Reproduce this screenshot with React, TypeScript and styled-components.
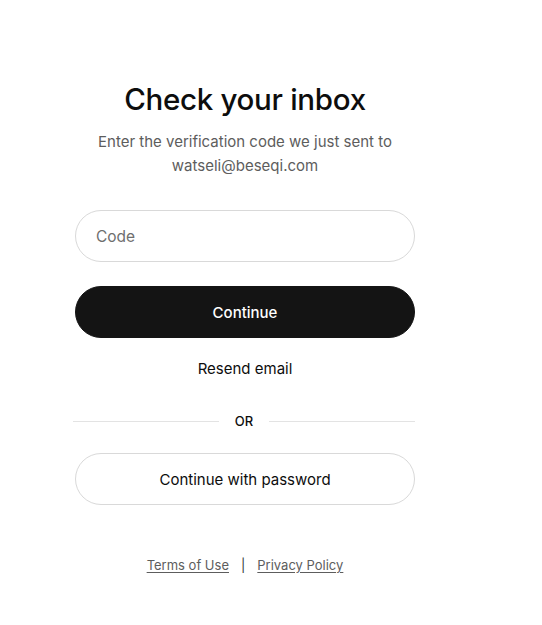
import React from "react";
import styled, { createGlobalStyle } from "styled-components";

const Global = createGlobalStyle`
  html, body { margin: 0; padding: 0; background: #fff; }
  body { font-family: Inter, "Noto Sans", sans-serif; color: #0d0d0d; }
  * { box-sizing: border-box; }
`;

const Page = styled.main`
  display: flex;
  justify-content: flex-start;
  padding: 80px 0 40px 75px;
  min-height: 625px;
`;

const Column = styled.section`
  width: 340px;
  display: flex;
  flex-direction: column;
  align-items: stretch;
`;

const Title = styled.h1`
  margin: 0;
  font-size: 29.5px;
  font-weight: 500;
  line-height: 38px;
  text-align: center;
  letter-spacing: -0.3px;
  color: #0d0d0d;
`;

const Subtitle = styled.p`
  margin: 12px 0 0;
  font-size: 15px;
  line-height: 24px;
  text-align: center;
  color: #5d5d5d;
`;

const Field = styled.input`
  margin-top: 32px;
  height: 52px;
  width: 100%;
  border: 1px solid #d9d9d9;
  border-radius: 26px;
  padding: 0 20px;
  font: inherit;
  font-size: 15.5px;
  color: #0d0d0d;
  outline: none;
  &::placeholder { color: #6e6e6e; }
`;

const PillButton = styled.button<{ $dark?: boolean }>`
  height: 52px;
  width: 100%;
  border-radius: 26px;
  font: inherit;
  font-size: 15px;
  font-weight: ${(p) => (p.$dark ? 500 : 400)};
  cursor: pointer;
  border: 1px solid ${(p) => (p.$dark ? "#141414" : "#d9d9d9")};
  background: ${(p) => (p.$dark ? "#141414" : "#fff")};
  color: ${(p) => (p.$dark ? "#fff" : "#0d0d0d")};
`;

const PrimaryButton = styled(PillButton)`
  margin-top: 24px;
`;

const TextButton = styled.button`
  margin-top: 20px;
  align-self: center;
  background: none;
  border: none;
  padding: 0;
  font: inherit;
  font-size: 15px;
  line-height: 22px;
  color: #0d0d0d;
  cursor: pointer;
`;

const Divider = styled.div`
  margin: 33px 0 0 -2px;
  display: grid;
  grid-template-columns: 1fr auto 1fr;
  align-items: center;
  gap: 16px;
  font-size: 13px;
  font-weight: 500;
  color: #0d0d0d;
  &::before, &::after {
    content: "";
    height: 1px;
    background: #e3e3e3;
  }
`;

const SecondaryButton = styled(PillButton)`
  margin-top: 24px;
`;

const Footer = styled.footer`
  margin-top: 52px;
  display: flex;
  justify-content: center;
  align-items: center;
  gap: 12px;
  font-size: 13px;
  color: #5d5d5d;
`;

const FooterLink = styled.a`
  color: #5d5d5d;
  text-decoration: underline;
  text-underline-offset: 2px;
`;

const Separator = styled.span`
  color: #333;
`;

export default function App() {
  return (
    <>
      <Global />
      <Page>
        <Column>
          <Title>Check your inbox</Title>
          <Subtitle>
            Enter the verification code we just sent to
            <br />
            watseli@beseqi.com
          </Subtitle>
          <Field placeholder="Code" />
          <PrimaryButton $dark>Continue</PrimaryButton>
          <TextButton>Resend email</TextButton>
          <Divider>OR</Divider>
          <SecondaryButton>Continue with password</SecondaryButton>
          <Footer>
            <FooterLink href="#">Terms of Use</FooterLink>
            <Separator>|</Separator>
            <FooterLink href="#">Privacy Policy</FooterLink>
          </Footer>
        </Column>
      </Page>
    </>
  );
}
